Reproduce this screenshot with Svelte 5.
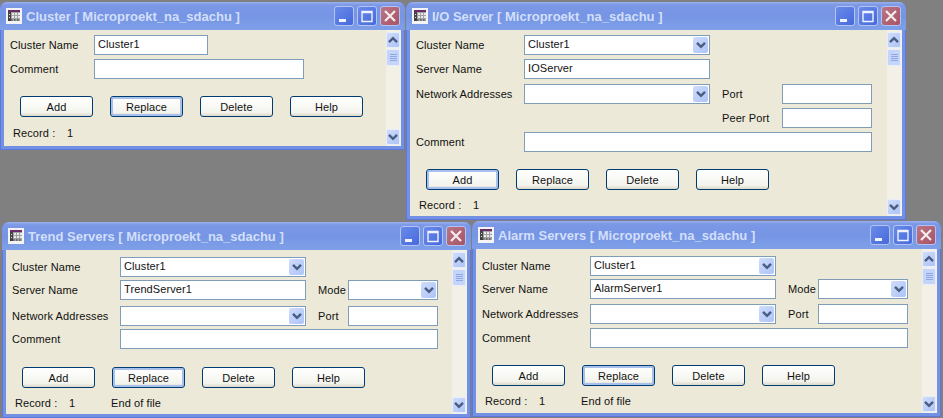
<script>
    const clusterRow = (type) => ({ label: 'Cluster Name', type, value: 'Cluster1' });

    const windows = [
        {
            title: 'Cluster [ Microproekt_na_sdachu ]',
            left: 0, top: 2, width: 405, height: 148,
            labelWidth: 84, padTop: 5, btnTop: 17, btnLeft: 10, focused: 'Replace',
            record: 'Record :', eof: '',
            rows: [
                { label: 'Cluster Name', type: 'input', size: 114, value: 'Cluster1' },
                { label: 'Comment', type: 'input', size: 210, value: '' }
            ]
        },
        {
            title: 'I/O Server [ Microproekt_na_sdachu ]',
            left: 406, top: 2, width: 500, height: 218,
            labelWidth: 108, padTop: 5, btnTop: 17, btnLeft: 10, focused: 'Add',
            record: 'Record :', eof: '',
            rows: [
                { ...clusterRow('combo'), size: 186 },
                { label: 'Server Name', type: 'input', size: 186, value: 'IOServer' },
                { label: 'Network Addresses', type: 'combo', size: 186, value: '', gap: 5,
                    extra: { label: 'Port', labelWidth: 60, type: 'input', size: 90 } },
                { label: '', type: 'none', size: 186,
                    extra: { label: 'Peer Port', labelWidth: 60, type: 'input', size: 90 } },
                { label: 'Comment', type: 'input', size: 348, value: '' }
            ]
        },
        {
            title: 'Trend Servers [ Microproekt_na_sdachu ]',
            left: 2, top: 222, width: 469, height: 196,
            labelWidth: 108, padTop: 7, btnTop: 18, btnLeft: 10, focused: 'Replace',
            record: 'Record :', eof: 'End of file',
            rows: [
                { ...clusterRow('combo'), size: 186 },
                { label: 'Server Name', type: 'input', size: 186, value: 'TrendServer1', gap: 3,
                    extra: { label: 'Mode', labelWidth: 30, type: 'combo', size: 90 } },
                { label: 'Network Addresses', type: 'combo', size: 186, value: '', gap: 6,
                    extra: { label: 'Port', labelWidth: 30, type: 'input', size: 90 } },
                { label: 'Comment', type: 'input', size: 318, value: '', gap: 3 }
            ]
        },
        {
            title: 'Alarm Servers [ Microproekt_na_sdachu ]',
            left: 472, top: 221, width: 469, height: 196,
            labelWidth: 108, padTop: 7, btnTop: 17, btnLeft: 10, focused: 'Replace',
            record: 'Record :', eof: 'End of file',
            rows: [
                { ...clusterRow('combo'), size: 186 },
                { label: 'Server Name', type: 'input', size: 186, value: 'AlarmServer1', gap: 3,
                    extra: { label: 'Mode', labelWidth: 30, type: 'combo', size: 90 } },
                { label: 'Network Addresses', type: 'combo', size: 186, value: '', gap: 5,
                    extra: { label: 'Port', labelWidth: 30, type: 'input', size: 90 } },
                { label: 'Comment', type: 'input', size: 318, value: '' }
            ]
        }
    ];

    const buttons = ['Add', 'Replace', 'Delete', 'Help'];
</script>

{#snippet chevron(up)}
    <svg width="10" height="8" viewBox="0 0 10 8">
        <path d={up ? 'M1 6.2 L5 2.2 L9 6.2' : 'M1 1.8 L5 5.8 L9 1.8'} fill="none" stroke="#4a5d82" stroke-width="2.4" />
    </svg>
{/snippet}

{#snippet field(type, size, value)}
    {#if type === 'none'}
        <div class="blank" style="width:{size}px"></div>
    {:else}
        <div class="field" style="width:{size}px">
            <span class="value">{value ?? ''}</span>
            {#if type === 'combo'}
                <span class="drop">{@render chevron(false)}</span>
            {/if}
        </div>
    {/if}
{/snippet}

<div class="desktop">
    {#each windows as win}
        <section class="window" style="left:{win.left}px;top:{win.top}px;width:{win.width}px;height:{win.height}px">
            <header class="titlebar">
                <svg class="appicon" width="16" height="16" viewBox="0 0 16 16">
                    <rect width="16" height="16" fill="#f4f4f4" />
                    <rect x="2" y="2" width="12" height="2" fill="#6a2a66" />
                    <rect x="2" y="4" width="12" height="9" fill="#a2a2a2" />
                    <rect x="2" y="4" width="3" height="9" fill="#444" />
                    <rect x="3" y="6" width="1" height="1" fill="#ddd" />
                    <rect x="3" y="9" width="1" height="1" fill="#ddd" />
                    <rect x="6" y="5" width="2" height="2" fill="#e8e8e8" />
                    <rect x="9" y="5" width="2" height="2" fill="#e8e8e8" />
                    <rect x="12" y="5" width="2" height="2" fill="#e8e8e8" />
                    <rect x="6" y="8" width="2" height="2" fill="#e8e8e8" />
                    <rect x="9" y="8" width="2" height="2" fill="#e8e8e8" />
                    <rect x="12" y="8" width="2" height="2" fill="#e8e8e8" />
                    <path d="M2 12h1.500M5 12h1.500M8 12h1.500M11 12h1.500" stroke="#333" stroke-width="1" />
                </svg>
                <span class="title">{win.title}</span>
                <div class="controls">
                    <button class="ctl">
                        <svg width="18" height="18" viewBox="0 0 18 18"><rect x="4" y="12" width="7" height="3" fill="#f0f3fd" /></svg>
                    </button>
                    <button class="ctl">
                        <svg width="18" height="18" viewBox="0 0 18 18"><path d="M4 4.5h10v10h-10z M4 5.5h10" fill="none" stroke="#f0f3fd" stroke-width="1.4" /></svg>
                    </button>
                    <button class="ctl close">
                        <svg width="18" height="18" viewBox="0 0 18 18"><path d="M4 4 L14 14 M14 4 L4 14" fill="none" stroke="#f4ecee" stroke-width="2.2" /></svg>
                    </button>
                </div>
            </header>
            <div class="client">
                <div class="form" style="padding-top:{win.padTop}px">
                    <div class="rows">
                        {#each win.rows as row}
                            <div class="row" style="margin-top:{row.gap ?? 4}px">
                                <label style="width:{win.labelWidth}px">{row.label}</label>
                                {@render field(row.type, row.size, row.value)}
                                {#if row.extra}
                                    <label class="extra" style="width:{row.extra.labelWidth}px">{row.extra.label}</label>
                                    {@render field(row.extra.type, row.extra.size, '')}
                                {/if}
                            </div>
                        {/each}
                    </div>
                    <div class="actions" style="margin-top:{win.btnTop}px;margin-left:{win.btnLeft}px">
                        {#each buttons as name}
                            <button class="btn" class:focused={name === win.focused}>{name}</button>
                        {/each}
                    </div>
                    <div class="status">
                        <span class="rec">{win.record}</span>
                        <span class="num">1</span>
                        <span>{win.eof}</span>
                    </div>
                </div>
                <div class="scrollbar">
                    <div class="sbtn">{@render chevron(true)}</div>
                    <div class="thumb"><i></i><i></i><i></i><i></i></div>
                    <div class="track"></div>
                    <div class="sbtn">{@render chevron(false)}</div>
                </div>
            </div>
        </section>
    {/each}
</div>

<style>
    :global(body) {
        margin: 0;
        background: #808080;
    }

    .desktop {
        position: relative;
        width: 943px;
        height: 418px;
        overflow: hidden;
        background: #808080;
        font-family: "Liberation Sans", Arial, sans-serif;
        font-size: 11px;
        letter-spacing: 0.1px;
        color: #111;
    }

    .window {
        position: absolute;
        box-sizing: border-box;
        display: flex;
        flex-direction: column;
        padding: 0 4px 4px;
        border-radius: 7px 7px 0 0;
        background: #7391e4;
        box-shadow: inset 1px 0 #5d78d8, inset -1px 0 #5d78d8, inset 0 -1px #5d78d8;
    }

    .titlebar {
        flex: none;
        height: 28px;
        display: flex;
        align-items: center;
        margin: 0 -4px;
        padding: 0 5px 0 6px;
        border-radius: 7px 7px 0 0;
        background: linear-gradient(#9ab0ee 0, #7c98e6 3px, #7595e4 50%, #7fa0e8 100%);
    }

    .appicon {
        flex: none;
    }

    .title {
        margin-left: 4px;
        font-weight: bold;
        font-size: 13px;
        letter-spacing: 0;
        color: #d3dffa;
        white-space: nowrap;
    }

    .controls {
        margin-left: auto;
        display: flex;
        gap: 3px;
    }

    .ctl {
        width: 20px;
        height: 20px;
        padding: 0;
        display: flex;
        align-items: center;
        justify-content: center;
        border: 1px solid #b4c4f2;
        border-radius: 3px;
        background: linear-gradient(135deg, #6a8bea, #4569db);
    }

    .ctl.close {
        background: linear-gradient(135deg, #bb7585, #a85365);
    }

    .client {
        flex: 1;
        display: flex;
        min-height: 0;
        background: #ece9d8;
    }

    .form {
        flex: 1;
        min-width: 0;
        padding-left: 6px;
        display: flex;
        flex-direction: column;
    }

    .rows {
        display: flex;
        flex-direction: column;
    }

    .row:first-child {
        margin-top: 0 !important;
    }

    .row {
        display: flex;
        align-items: center;
        height: 20px;
    }

    label {
        flex: none;
    }

    label.extra {
        margin-left: 12px;
    }

    .field {
        flex: none;
        box-sizing: border-box;
        height: 20px;
        display: flex;
        align-items: center;
        justify-content: space-between;
        padding: 0 1px 0 3px;
        border: 1px solid #7f9db9;
        background: #fff;
    }

    .value {
        padding-bottom: 2px;
    }

    .blank {
        flex: none;
    }

    .drop {
        width: 15px;
        height: 16px;
        display: flex;
        align-items: center;
        justify-content: center;
        border-radius: 2px;
        background: linear-gradient(135deg, #cfdcfb, #aec4f7);
    }

    .actions {
        display: flex;
        gap: 17px;
    }

    .btn {
        box-sizing: border-box;
        width: 73px;
        height: 21px;
        padding: 0;
        font: inherit;
        letter-spacing: inherit;
        color: #111;
        border: 1px solid #003c74;
        border-radius: 3px;
        background: linear-gradient(#fff, #f4f4ee 80%, #dcd8c8);
    }

    .btn.focused {
        box-shadow: inset 0 0 0 2px #a8c0ec;
    }

    .status {
        flex: 1;
        display: flex;
        align-items: center;
        padding-left: 3px;
        padding-top: 3px;
    }

    .rec {
        width: 54px;
    }

    .num {
        width: 42px;
    }

    .scrollbar {
        flex: none;
        width: 14px;
        padding-right: 1px;
        padding-top: 2px;
        padding-bottom: 1px;
        display: flex;
        flex-direction: column;
        background: #f3f1e7;
    }

    .sbtn {
        flex: none;
        height: 16px;
        display: flex;
        align-items: center;
        justify-content: center;
        border: 1px solid #e8edfb;
        box-sizing: border-box;
        border-radius: 2px;
        background: linear-gradient(135deg, #cfdcfb, #aec4f7);
    }

    .thumb {
        flex: none;
        box-sizing: border-box;
        height: 17px;
        margin-top: 1px;
        display: flex;
        flex-direction: column;
        align-items: center;
        justify-content: center;
        gap: 1px;
        border: 1px solid #e8edfb;
        border-radius: 2px;
        background: #c5d5fa;
    }

    .thumb i {
        width: 7px;
        height: 1px;
        background: #8fa7e6;
    }

    .track {
        flex: 1;
    }
</style>
